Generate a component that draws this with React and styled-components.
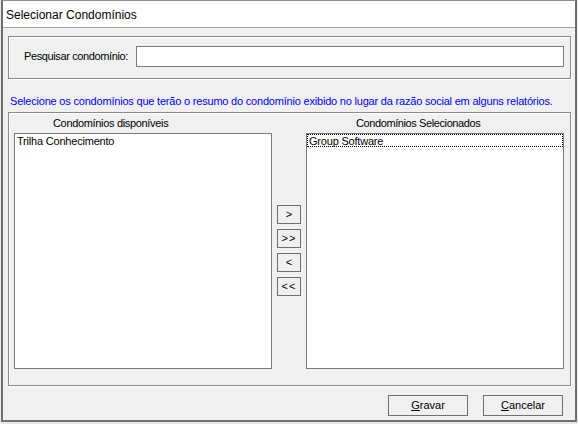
import React from "react";
import styled, { createGlobalStyle } from "styled-components";

const GlobalStyle = createGlobalStyle`
  html, body { margin: 0; padding: 0; background: #e9e9e9; }
  body {
    font-family: "Liberation Sans", Arial, sans-serif;
    font-size: 11px;
    color: #000;
  }
  * { box-sizing: border-box; }
`;

const Window = styled.div`
  width: 576px;
  height: 422px;
  margin-left: 1px;
  background: #f0f0f0;
  border: 2px solid #6f6f6f;
  border-top: 1px solid #8e8e8e;
  display: flex;
  flex-direction: column;
`;

const TitleBar = styled.div`
  height: 27px;
  flex: none;
  background: #fff;
  border-bottom: 1px solid #a3a3a3;
  padding: 7px 0 0 3px;
  font-size: 12px;
  line-height: 14px;
`;

const Content = styled.div`
  flex: 1;
  display: flex;
  flex-direction: column;
  padding: 8px 4px 0 5px;
`;

const GroupBox = styled.div`
  flex: none;
  height: ${(p) => p.$height}px;
  border: 1px solid #8a8a8a;
  box-shadow: inset 1px 1px 0 #fff, 1px 1px 0 #fff;
  display: flex;
`;

const SearchRow = styled(GroupBox)`
  align-items: flex-start;
  padding: 9px 6px 0 15px;
`;

const Label = styled.span`
  line-height: 13px;
  margin-top: 4px;
  margin-right: 8px;
  letter-spacing: -0.38px;
  white-space: nowrap;
`;

const TextInput = styled.div`
  flex: 1;
  height: 21px;
  background: #fff;
  border: 1px solid #7a7a7a;
`;

const Hint = styled.div`
  margin: 16px 0 4px 2px;
  line-height: 13px;
  color: #0000ff;
  letter-spacing: -0.2px;
  white-space: nowrap;
`;

const ListsGroup = styled(GroupBox)`
  padding: 0 6px 0 5px;
`;

const Column = styled.div`
  width: 258px;
  display: flex;
  flex-direction: column;
`;

const Header = styled.div`
  height: 20px;
  padding: 4px 0 0 ${(p) => p.$indent}px;
  line-height: 13px;
  letter-spacing: ${(p) => p.$spacing}px;
  white-space: nowrap;
`;

const ListBox = styled.div`
  height: 236px;
  background: #fff;
  border: 1px solid #7a7a7a;
`;

const Item = styled.div`
  height: 13px;
  line-height: 13px;
  padding: 0 0 0 ${(p) => (p.$focused ? 1 : 2)}px;
  margin-top: ${(p) => (p.$focused ? 0 : 1)}px;
  border: ${(p) => (p.$focused ? "1px dotted #000" : "none")};
  letter-spacing: -0.2px;
  white-space: nowrap;
`;

const Mover = styled.div`
  width: 34px;
  display: flex;
  flex-direction: column;
  align-items: center;
  gap: 5px;
  padding-top: 92px;
`;

const SmallButton = styled.div`
  width: 24px;
  height: 19px;
  border: 1px solid #707070;
  background: #f0f0f0;
  display: flex;
  align-items: center;
  justify-content: center;
  line-height: 13px;
  letter-spacing: ${(p) => (p.$double ? "1px" : "0")};
`;

const ButtonRow = styled.div`
  display: flex;
  justify-content: flex-end;
  gap: 15px;
  margin: 9px 8px 0 0;
`;

const Button = styled.div`
  width: 80px;
  height: 21px;
  border: 1px solid #707070;
  background: #f0f0f0;
  display: flex;
  align-items: center;
  justify-content: center;
  line-height: 13px;
  u { text-decoration: underline; text-underline-offset: 1px; }
`;

export default function App() {
  return (
    <>
      <GlobalStyle />
      <Window>
        <TitleBar>Selecionar Condomínios</TitleBar>
        <Content>
          <SearchRow $height={43}>
            <Label>Pesquisar condomínio:</Label>
            <TextInput />
          </SearchRow>
          <Hint>
            Selecione os condomínios que terão o resumo do condomínio exibido no lugar da razão social em alguns relatórios.
          </Hint>
          <ListsGroup $height={274}>
            <Column>
              <Header $indent={39} $spacing={-0.33}>Condomínios disponíveis</Header>
              <ListBox>
                <Item>Trilha Conhecimento</Item>
              </ListBox>
            </Column>
            <Mover>
              <SmallButton>&gt;</SmallButton>
              <SmallButton $double>&gt;&gt;</SmallButton>
              <SmallButton>&lt;</SmallButton>
              <SmallButton $double>&lt;&lt;</SmallButton>
            </Mover>
            <Column>
              <Header $indent={50} $spacing={-0.4}>Condomínios Selecionados</Header>
              <ListBox>
                <Item $focused>Group Software</Item>
              </ListBox>
            </Column>
          </ListsGroup>
          <ButtonRow>
            <Button>
              <span><u>G</u>ravar</span>
            </Button>
            <Button>
              <span><u>C</u>ancelar</span>
            </Button>
          </ButtonRow>
        </Content>
      </Window>
    </>
  );
}
